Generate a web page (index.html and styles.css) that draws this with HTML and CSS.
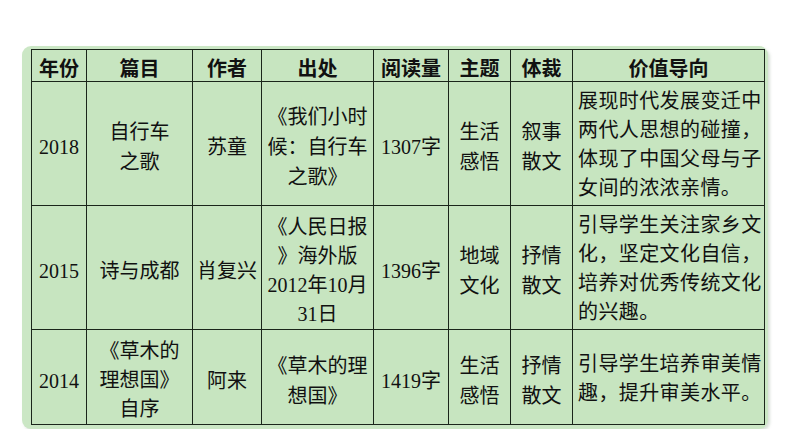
FILE: index.html
```html
<!DOCTYPE html>
<html lang="zh">
<head>
<meta charset="utf-8">
<link rel="stylesheet" href="styles.css">
</head>
<body>
<div class="panel">
<table class="grid">
<colgroup>
<col class="c1"><col class="c2"><col class="c3"><col class="c4"><col class="c5"><col class="c6"><col class="c7"><col class="c8">
</colgroup>
<thead>
<tr class="head">
<th>年份</th><th>篇目</th><th>作者</th><th>出处</th><th>阅读量</th><th>主题</th><th>体裁</th><th>价值导向</th>
</tr>
</thead>
<tbody>
<tr class="r1">
<td class="num">2018</td>
<td>自行车<br>之歌</td>
<td>苏童</td>
<td>《我们小时<br>候：自行车<br>之歌》</td>
<td><span class="num">1307</span>字</td>
<td>生活<br>感悟</td>
<td>叙事<br>散文</td>
<td class="value">展现时代发展变迁中<br>两代人思想的碰撞，<br>体现了中国父母与子<br>女间的浓浓亲情。</td>
</tr>
<tr class="r2">
<td class="num">2015</td>
<td>诗与成都</td>
<td>肖复兴</td>
<td class="tight">《人民日报<br>》海外版<br><span class="num">2012</span>年<span class="num">10</span>月<br><span class="num">31</span>日</td>
<td><span class="num">1396</span>字</td>
<td>地域<br>文化</td>
<td>抒情<br>散文</td>
<td class="value">引导学生关注家乡文<br>化，坚定文化自信，<br>培养对优秀传统文化<br>的兴趣。</td>
</tr>
<tr class="r3">
<td class="num">2014</td>
<td class="tight">《草木的<br>理想国》<br>自序</td>
<td>阿来</td>
<td>《草木的理<br>想国》</td>
<td><span class="num">1419</span>字</td>
<td>生活<br>感悟</td>
<td>抒情<br>散文</td>
<td class="value">引导学生培养审美情<br>趣，提升审美水平。</td>
</tr>
</tbody>
</table>
</div>
</body>
</html>
```

FILE: styles.css
```css
html, body {
  margin: 0;
  padding: 0;
  background: #ffffff;
}
body {
  padding: 46px 0 0 22px;
}
.panel {
  width: 733px;
  padding: 3px 4px 4px 9px;
  background: #cbe7c5;
  border-radius: 9px;
  box-shadow: 2px 2px 3px rgba(150, 170, 150, 0.35);
}
.grid {
  border-collapse: collapse;
  table-layout: fixed;
  width: 733px;
  font-family: "Liberation Serif", "Noto Sans CJK SC", serif;
  font-size: 20px;
  color: #111;
  background: #c7e5c0;
}
.c1 { width: 55px; }
.c2 { width: 106px; }
.c3 { width: 69px; }
.c4 { width: 112px; }
.c5 { width: 75px; }
.c6 { width: 62px; }
.c7 { width: 62px; }
.c8 { width: 192px; }
.grid th, .grid td {
  border: 1.5px solid #1b261b;
  padding: 7px 0 0 0;
  text-align: center;
  vertical-align: middle;
  line-height: 30px;
  overflow: hidden;
  white-space: nowrap;
}
.grid td.tight {
  line-height: 29px;
}
.grid th {
  font-family: "Noto Sans CJK SC", sans-serif;
  font-weight: 700;
  font-size: 20px;
  line-height: 26px;
  padding-top: 4px;
}
.head { height: 32px; }
.r1 { height: 124px; }
.r2 { height: 123px; }
.r3 { height: 93px; }
.grid td.value {
  text-align: left;
  padding: 3px 0 0 5px;
  line-height: 29px;
  letter-spacing: 0.4px;
}
.num {
  font-family: "Liberation Serif", serif;
}
```
